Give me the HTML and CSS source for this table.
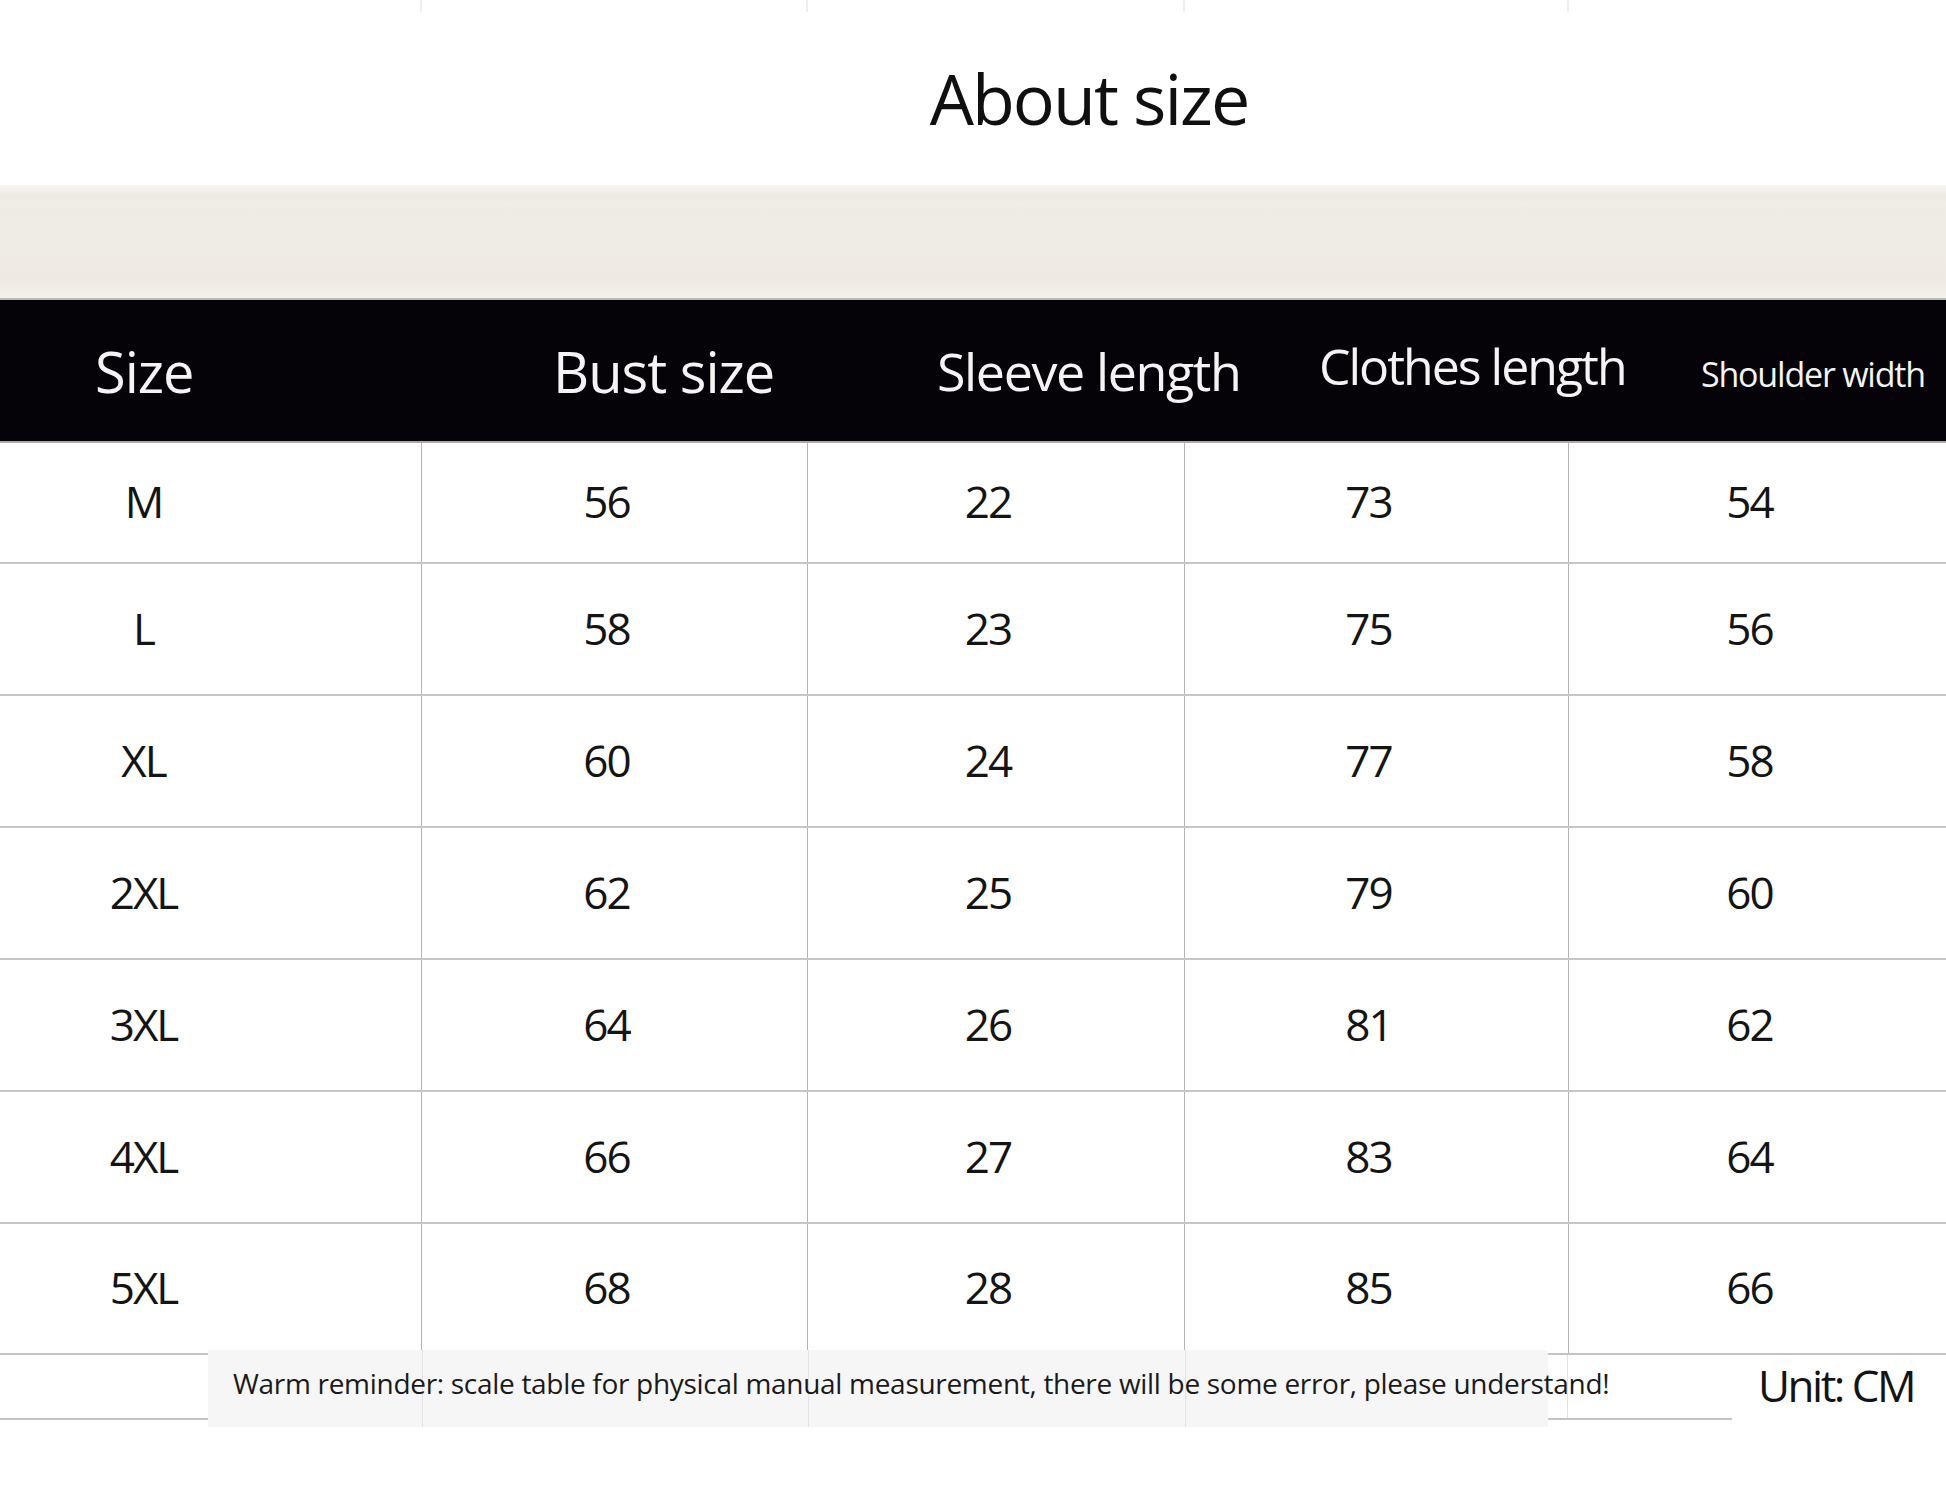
FILE: index.html
```html
<!DOCTYPE html>
<html lang="en">
<head>
<meta charset="utf-8">
<title>About size</title>
<link rel="stylesheet" href="styles.css">
</head>
<body>
<div class="page">
  <header class="hero">
    <div class="ticks"><span></span><span></span><span></span><span></span><span></span></div>
    <h1 class="title">About size</h1>
  </header>
  <div class="band"></div>
  <div class="thead">
    <div class="th th-size">Size</div>
    <div class="th th-bust">Bust size</div>
    <div class="th th-sleeve">Sleeve length</div>
    <div class="th th-clothes">Clothes length</div>
    <div class="th th-shoulder">Shoulder width</div>
  </div>
  <div class="tbody">
    <div class="row first"><div class="cell lead">M</div><div class="cell">56</div><div class="cell">22</div><div class="cell">73</div><div class="cell">54</div></div>
    <div class="row"><div class="cell lead">L</div><div class="cell">58</div><div class="cell">23</div><div class="cell">75</div><div class="cell">56</div></div>
    <div class="row"><div class="cell lead">XL</div><div class="cell">60</div><div class="cell">24</div><div class="cell">77</div><div class="cell">58</div></div>
    <div class="row"><div class="cell lead">2XL</div><div class="cell">62</div><div class="cell">25</div><div class="cell">79</div><div class="cell">60</div></div>
    <div class="row"><div class="cell lead">3XL</div><div class="cell">64</div><div class="cell">26</div><div class="cell">81</div><div class="cell">62</div></div>
    <div class="row"><div class="cell lead">4XL</div><div class="cell">66</div><div class="cell">27</div><div class="cell">83</div><div class="cell">64</div></div>
    <div class="row last"><div class="cell lead">5XL</div><div class="cell">68</div><div class="cell">28</div><div class="cell">85</div><div class="cell">66</div></div>
  </div>
  <div class="foot">
    <div class="f-edge"></div>
    <div class="f-note">Warm reminder: scale table for physical manual measurement, there will be some error, please understand!</div>
    <div class="f-edge f-mid"></div>
    <div class="f-unit">Unit: CM</div>
  </div>
</div>
</body>
</html>
```
FILE: styles.css
```css
html, body {
  margin: 0;
  padding: 0;
  background: #ffffff;
}

body {
  font-family: "Open Sans", "Noto Sans", "Liberation Sans", sans-serif;
  color: #131313;
}

.page {
  width: 1946px;
  height: 1507px;
  overflow: hidden;
  background: #ffffff;
}

/* ---------- hero ---------- */
.hero {
  height: 185px;
  display: flex;
  flex-direction: column;
  align-items: center;
  padding-left: 232px;
  box-sizing: border-box;
}

.ticks {
  align-self: stretch;
  margin-left: -232px;
  height: 12px;
  display: grid;
  grid-template-columns: 422px 386px 377px 384px 1fr;
}

.ticks span {
  border-right: 2px solid #eeeeee;
}

.ticks span:last-child {
  border-right: 0;
}

.title {
  margin: 51px 0 0;
  font-size: 70px;
  line-height: 70px;
  font-weight: 400;
  letter-spacing: -2px;
  color: #101010;
}

/* ---------- beige band ---------- */
.band {
  height: 113px;
  background: linear-gradient(to bottom,
    #f7f6f2 0px, #f1eee7 6px, #ece9df 12px, #f0ede6 18px,
    #eeebe2 26px, #efece4 60px, #eeeae1 95px, #f2f0ea 110px, #f4f3ef 113px);
  border-bottom: 2px solid #b9b9bb;
}

/* ---------- header ---------- */
.thead {
  height: 141px;
  background: #050307;
  display: grid;
  grid-template-columns: 458px 384px 382px 382px 1fr;
  padding-left: 95px;
  align-items: center;
  color: #f4f4f4;
  border-bottom: 2px solid #a9a9ab;
}

.th {
  white-space: nowrap;
  line-height: 1;
}

.th-size,
.th-bust {
  font-size: 56px;
  letter-spacing: -1px;
  padding-top: 1px;
}

.th-sleeve {
  font-size: 52px;
  letter-spacing: -1.4px;
}

.th-clothes {
  font-size: 50px;
  letter-spacing: -2px;
  padding-bottom: 9px;
}

.th-shoulder {
  font-size: 34px;
  letter-spacing: -1.2px;
  padding-top: 6px;
}

/* ---------- body ---------- */
.row {
  box-sizing: border-box;
  height: 132px;
  display: grid;
  grid-template-columns: 422px 386px 377px 384px 1fr;
  border-bottom: 2px solid #c6c6c9;
}

.row.first {
  height: 121px;
}

.row.last {
  height: 129px;
  border-bottom: 0;
}

.cell {
  display: flex;
  align-items: center;
  justify-content: center;
  padding-right: 16px;
  padding-bottom: 3px;
  font-size: 44px;
  letter-spacing: -2px;
  line-height: 1;
  border-right: 1px solid #b4b4b7;
  color: #141414;
}

.cell:last-child {
  border-right: 0;
}

.cell.lead {
  padding-right: 134px;
}

/* ---------- footer ---------- */
.foot {
  display: grid;
  grid-template-columns: 208px 1340px 184px 1fr;
  align-items: start;
}

.f-edge {
  height: 63px;
  border-top: 2px solid #c3c3c6;
  border-bottom: 2px solid #c3c3c6;
}

.f-mid {
  background: linear-gradient(to right, transparent 19px, #e2e2e4 19px, #e2e2e4 20px, transparent 20px);
}

.f-note {
  margin-top: -3px;
  height: 77px;
  box-sizing: border-box;
  padding-left: 25px;
  padding-bottom: 11px;
  display: flex;
  align-items: center;
  font-size: 28px;
  letter-spacing: -0.3px;
  color: #1a1a1a;
  white-space: nowrap;
  background-color: #f6f6f6;
  background-image:
    linear-gradient(to right, transparent 214px, #e4e4e6 214px, #e4e4e6 215px, transparent 215px),
    linear-gradient(to right, transparent 600px, #e4e4e6 600px, #e4e4e6 601px, transparent 601px),
    linear-gradient(to right, transparent 977px, #e4e4e6 977px, #e4e4e6 978px, transparent 978px);
}

.f-unit {
  height: 72px;
  box-sizing: border-box;
  border-top: 2px solid #c3c3c6;
  padding-left: 26px;
  padding-bottom: 10px;
  display: flex;
  align-items: center;
  font-size: 44px;
  letter-spacing: -2.5px;
  color: #141414;
  white-space: nowrap;
}
```
